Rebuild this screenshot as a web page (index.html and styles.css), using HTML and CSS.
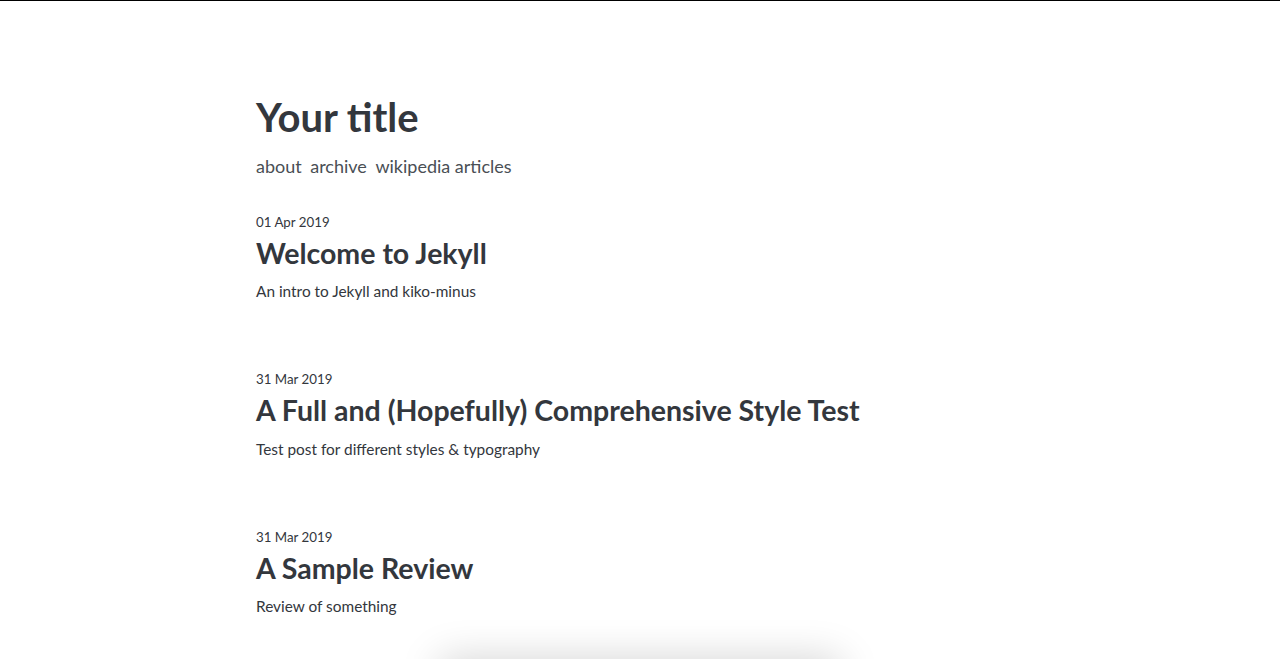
FILE: index.html
```html
<!DOCTYPE html>
<html lang="en">
<head>
<meta charset="utf-8">
<title>Your title</title>
<link rel="stylesheet" href="styles.css">
</head>
<body>
<div class="page">
  <header class="site-header">
    <h1 class="site-title">Your title</h1>
    <nav class="site-nav">
      <a href="#">about</a>
      <a href="#">archive</a>
      <a href="#">wikipedia articles</a>
    </nav>
  </header>
  <main class="posts">
    <article class="post">
      <div class="post-date">01 Apr 2019</div>
      <h2 class="post-title">Welcome to Jekyll</h2>
      <p class="post-desc">An intro to Jekyll and kiko-minus</p>
    </article>
    <article class="post">
      <div class="post-date">31 Mar 2019</div>
      <h2 class="post-title">A Full and (Hopefully) Comprehensive Style Test</h2>
      <p class="post-desc">Test post for different styles &amp; typography</p>
    </article>
    <article class="post">
      <div class="post-date">31 Mar 2019</div>
      <h2 class="post-title">A Sample Review</h2>
      <p class="post-desc">Review of something</p>
    </article>
  </main>
</div>
<div class="floating-bar"></div>
</body>
</html>
```
FILE: styles.css
```css
html, body {
  margin: 0;
  padding: 0;
  background: #fff;
}
body {
  border-top: 1px solid #000;
  font-family: Lato, "Open Sans", sans-serif;
  color: #33373d;
  overflow: hidden;
  height: 658px;
}
.page {
  width: 768px;
  margin: 0 auto;
  padding-top: 92px;
}
.site-header {
  display: flex;
  flex-direction: column;
  gap: 15px;
}
.site-title {
  margin: 0;
  font-size: 40px;
  line-height: 1.2;
  font-weight: 700;
  color: #33373d;
}
.site-nav {
  display: flex;
  gap: 8.5px;
  font-size: 18px;
  line-height: 1.2;
}
.site-nav a {
  color: #4a4f55;
  text-decoration: none;
}
.posts {
  display: flex;
  flex-direction: column;
  gap: 71.5px;
  margin-top: 37px;
}
.post {
  display: flex;
  flex-direction: column;
}
.post-date {
  font-size: 13.3px;
  line-height: 1.2;
  color: #33373d;
}
.post-title {
  margin: 5px 0 0;
  font-size: 28.5px;
  line-height: 1.2;
  font-weight: 700;
  color: #33373d;
}
.post-desc {
  margin: 12.5px 0 0;
  font-size: 15.4px;
  line-height: 1.2;
  color: #33373d;
}
.floating-bar {
  position: fixed;
  left: 440px;
  width: 400px;
  top: 659px;
  height: 40px;
  background: #fff;
  box-shadow: 0 0 40px rgba(0, 0, 0, 0.18);
}
```
